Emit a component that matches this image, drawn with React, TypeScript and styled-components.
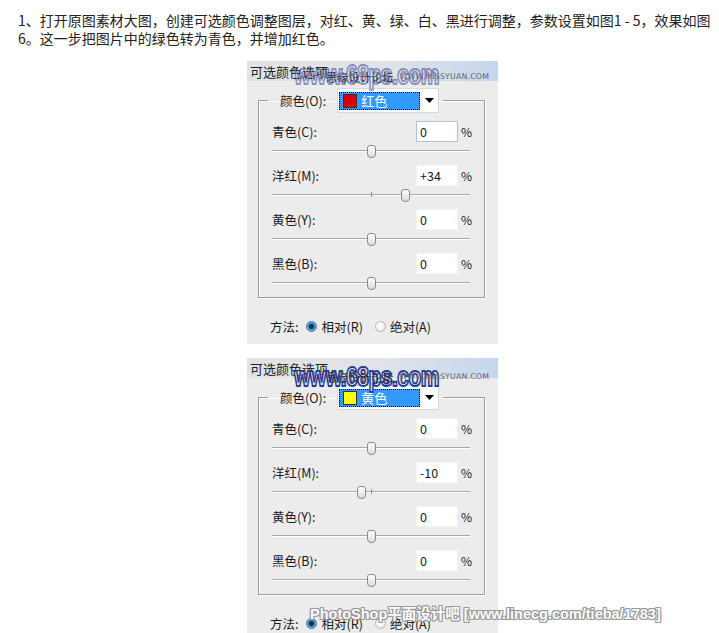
import React from "react";
import styled, { createGlobalStyle } from "styled-components";

const GlobalStyle = createGlobalStyle`
  html, body { margin: 0; padding: 0; background: #ffffff; }
  body {
    font-family: "Noto Sans CJK SC", "Noto Sans", "DejaVu Sans", sans-serif;
    overflow: hidden;
  }
`;

const Page = styled.div`
  position: relative;
  width: 719px;
  height: 633px;
  overflow: hidden;
`;

const Intro = styled.p`
  margin: 0;
  padding: 11px 0 0 18px;
  font-size: 14px;
  line-height: 18px;
  color: #222;
  white-space: nowrap;
`;

const Panels = styled.div`
  display: flex;
  flex-direction: column;
  gap: 14px;
  margin-top: 14px;
  padding-left: 247px;
`;

const Panel = styled.section`
  position: relative;
  width: 251px;
  height: 283px;
  flex-shrink: 0;
  background: #ececec;
  display: flex;
  flex-direction: column;
  font-size: 12.5px;
  color: #1a1a1a;
`;

const TitleBar = styled.div`
  height: 20px;
  display: flex;
  align-items: center;
  padding-left: 3px;
  font-size: 13px;
  color: #222;
  background: linear-gradient(to right, #e2e2e2 0%, #e0e3e8 55%, #c6d6ec 100%);
`;

const Group = styled.fieldset`
  margin: 7px 13px 0 11px;
  padding: 0 12px 0 13px;
  border: 1px solid #9c9c9c;
  box-shadow: inset 1px 1px 0 #fff, 1px 1px 0 #fff;
  min-width: 0;
`;

const Legend = styled.legend`
  margin-left: -4px;
  padding: 0 4px 0 12px;
  display: flex;
  align-items: center;
  gap: 11px;
  height: 25px;
`;

const Label = styled.span`
  line-height: 16px;
  white-space: nowrap;
`;

const Dropdown = styled.div`
  width: 99px;
  height: 23px;
  background: #fff;
  border: 1px solid #d8d8d8;
  display: flex;
  align-items: center;
  padding: 0 0 0 1px;
`;

const Selected = styled.div`
  width: 77px;
  height: 18px;
  background: #3399ff;
  outline: 1px dotted #000;
  outline-offset: -1px;
  display: flex;
  align-items: center;
  gap: 4px;
  padding-left: 4px;
  color: #fff;
  font-size: 13px;
`;

const Swatch = styled.span<{ $c: string }>`
  width: 14px;
  height: 14px;
  background: ${(p) => p.$c};
  border: 1px solid #333;
  box-sizing: border-box;
`;

const Arrow = styled.span`
  flex: 1;
  display: flex;
  justify-content: center;
`;

const Row = styled.div<{ $first?: boolean }>`
  display: flex;
  align-items: center;
  height: 21px;
  margin-top: ${(p) => (p.$first ? "8px" : "0")};
`;

const RowLabel = styled.span`
  flex: 1;
  line-height: 16px;
`;

const ValueBox = styled.div<{ $focus?: boolean }>`
  width: 37px;
  height: 19px;
  background: #fff;
  border: 1px solid ${(p) => (p.$focus ? "#a9c3dc" : "#f4f4f4")};
  display: flex;
  align-items: center;
  padding-left: 3px;
  box-sizing: content-box;
  font-size: 12.5px;
  margin-right: 3px;
`;

const Pct = styled.span`
  width: 11px;
  font-size: 12px;
`;

const SliderArea = styled.div`
  height: 23px;
  display: flex;
  align-items: flex-start;
`;

const Track = styled.div`
  position: relative;
  width: 198px;
  height: 1px;
  margin-top: 8px;
  background: #a8a8a8;
  box-shadow: 0 1px 0 #ffffff;
`;

const Tick = styled.span`
  position: absolute;
  left: 99px;
  top: -2px;
  width: 1px;
  height: 5px;
  background: #8c8c8c;
`;

const Thumb = styled.span`
  position: absolute;
  top: -5px;
  width: 7px;
  height: 11px;
  margin-left: -4px;
  border: 1px solid #8a8a8a;
  border-radius: 3px 3px 4px 4px;
  background: linear-gradient(#ffffff, #dcdcdc);
`;

const MethodRow = styled.div`
  display: flex;
  align-items: center;
  height: 18px;
  margin-top: 19px;
  padding-left: 23px;
  font-size: 12.5px;
`;

const RadioItem = styled.span<{ $gap: number }>`
  display: flex;
  align-items: center;
  gap: 4px;
  margin-left: ${(p) => p.$gap}px;
`;

const RadioDot = styled.span<{ $on?: boolean }>`
  width: 11px;
  height: 11px;
  border-radius: 50%;
  box-sizing: border-box;
  border: 1px solid ${(p) => (p.$on ? "#3d6f99" : "#b8b8b8")};
  background: ${(p) =>
    p.$on
      ? "radial-gradient(circle at 50% 50%, #0e3350 0 2px, #2f8ac4 3px, #9fd0ef 5px)"
      : "radial-gradient(circle at 40% 40%, #ffffff 0 2px, #e2e2e2 6px)"};
`;

const LogoMark = styled.span<{ $top: number; $left: number; $o: number }>`
  position: absolute;
  top: ${(p) => p.$top}px;
  left: ${(p) => p.$left}px;
  font-family: "Liberation Sans", "DejaVu Sans", sans-serif;
  font-weight: bold;
  font-size: 21px;
  letter-spacing: -0.5px;
  color: #f4f6ff;
  opacity: ${(p) => p.$o};
  -webkit-text-stroke: 1.5px #2c3d8e;
  line-height: 20px;
  white-space: nowrap;
  transform: scaleY(1.3);
  transform-origin: top left;
  pointer-events: none;
`;

const SiteMark = styled.span<{ $top: number; $left: number }>`
  position: absolute;
  top: ${(p) => p.$top}px;
  left: ${(p) => p.$left}px;
  display: flex;
  align-items: center;
  gap: 6px;
  white-space: nowrap;
  pointer-events: none;
`;

const SiteCn = styled.span`
  font-size: 11px;
  color: #2e3347;
  letter-spacing: 0.3px;
  line-height: 14px;
`;

const SiteEn = styled.span`
  font-family: "DejaVu Sans", sans-serif;
  font-size: 7.8px;
  color: #5e6470;
  letter-spacing: 0.2px;
  line-height: 12px;
`;

const ForumMark = styled.span`
  position: absolute;
  top: 604px;
  left: 310px;
  font-family: "Liberation Sans", "Noto Sans CJK SC", sans-serif;
  font-weight: bold;
  font-size: 14.5px;
  line-height: 20px;
  color: #fbfbfb;
  white-space: nowrap;
  text-shadow: 1px 0 0 #9a9a9a, -1px 0 0 #9a9a9a, 0 1px 0 #9a9a9a, 0 -1px 0 #9a9a9a,
    1px 1px 0 #9a9a9a, -1px -1px 0 #9a9a9a, 1px -1px 0 #9a9a9a, -1px 1px 0 #9a9a9a;
  pointer-events: none;
`;

type Channel = { label: string; value: string; pos: number; focus?: boolean };

type PanelData = {
  name: string;
  swatch: string;
  channels: Channel[];
  logoTop: number;
  logoOpacity: number;
  siteTop: number;
};

const ArrowIcon = () => (
  <svg width="9" height="5" viewBox="0 0 9 5">
    <polygon points="0,0 9,0 4.5,5" fill="#000" />
  </svg>
);

const Slider = ({ pos }: { pos: number }) => (
  <SliderArea>
    <Track>
      {pos !== 0.5 && <Tick />}
      <Thumb style={{ left: `${pos * 198}px` }} />
    </Track>
  </SliderArea>
);

const ColorPanel = ({ data }: { data: PanelData }) => (
  <Panel>
    <TitleBar>可选颜色选项</TitleBar>
    <Group>
      <Legend>
        <Label>颜色(O):</Label>
        <Dropdown>
          <Selected>
            <Swatch $c={data.swatch} />
            {data.name}
          </Selected>
          <Arrow>
            <ArrowIcon />
          </Arrow>
        </Dropdown>
      </Legend>
      {data.channels.map((c, i) => (
        <div key={c.label}>
          <Row $first={i === 0}>
            <RowLabel>{c.label}</RowLabel>
            <ValueBox $focus={c.focus}>{c.value}</ValueBox>
            <Pct>%</Pct>
          </Row>
          <Slider pos={c.pos} />
        </div>
      ))}
    </Group>
    <MethodRow>
      方法:
      <RadioItem $gap={8}>
        <RadioDot $on />
        相对(R)
      </RadioItem>
      <RadioItem $gap={12}>
        <RadioDot />
        绝对(A)
      </RadioItem>
    </MethodRow>
    <LogoMark $top={data.logoTop} $left={47} $o={data.logoOpacity}>
      www.68ps.com
    </LogoMark>
    <SiteMark $top={data.siteTop} $left={79}>
      <SiteCn>思缘设计论坛</SiteCn>
      <SiteEn>WWW.MISSYUAN.COM</SiteEn>
    </SiteMark>
  </Panel>
);

const panels: PanelData[] = [
  {
    name: "红色",
    swatch: "#e00000",
    logoTop: 1,
    logoOpacity: 0.5,
    siteTop: 9,
    channels: [
      { label: "青色(C):", value: "0", pos: 0.5, focus: true },
      { label: "洋红(M):", value: "+34", pos: 0.67 },
      { label: "黄色(Y):", value: "0", pos: 0.5 },
      { label: "黑色(B):", value: "0", pos: 0.5 },
    ],
  },
  {
    name: "黄色",
    swatch: "#ffff00",
    logoTop: 6,
    logoOpacity: 1,
    siteTop: 12,
    channels: [
      { label: "青色(C):", value: "0", pos: 0.5 },
      { label: "洋红(M):", value: "-10", pos: 0.45 },
      { label: "黄色(Y):", value: "0", pos: 0.5 },
      { label: "黑色(B):", value: "0", pos: 0.5 },
    ],
  },
];

export default function App() {
  return (
    <Page>
      <GlobalStyle />
      <Intro>
        1、打开原图素材大图，创建可选颜色调整图层，对红、黄、绿、白、黑进行调整，参数设置如图1 - 5，效果如图
        <br />
        6。这一步把图片中的绿色转为青色，并增加红色。
      </Intro>
      <Panels>
        {panels.map((p) => (
          <ColorPanel key={p.name} data={p} />
        ))}
      </Panels>
      <ForumMark>PhotoShop平面设计吧 [www.linecg.com/tieba/1783]</ForumMark>
    </Page>
  );
}
